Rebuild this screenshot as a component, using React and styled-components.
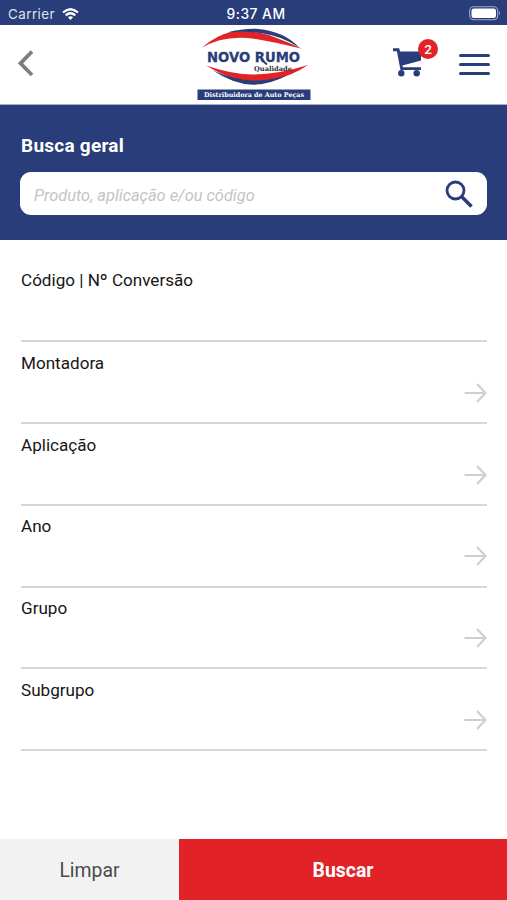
import React from 'react';
import styled, { createGlobalStyle } from 'styled-components';

const NAVY = '#293d7a';
const RED = '#e12227';

const GlobalStyle = createGlobalStyle`
  *, *::before, *::after { box-sizing: border-box; }
  body { margin: 0; background: #fff; }
  button, input { font: inherit; border: 0; padding: 0; background: none; }
`;

const Screen = styled.div`
  display: flex;
  flex-direction: column;
  width: 507px;
  height: 900px;
  background: #fff;
  color: #161616;
  font-family: Roboto, sans-serif;
  overflow: hidden;
`;

const StatusBar = styled.div`
  display: grid;
  grid-template-columns: 1fr auto 1fr;
  align-items: center;
  height: 25px;
  flex: none;
  padding: 2px 5px 0 8px;
  background: ${NAVY};
  color: #fff;
  font-family: Inter, sans-serif;
  font-size: 13.4px;
`;

const Carrier = styled.div`
  display: flex;
  align-items: center;
  gap: 7px;
  color: #dfe3ef;
  letter-spacing: 0.45px;
`;

const Clock = styled.div`
  position: relative;
  left: 1px;
  font-size: 13.8px;
  font-weight: 500;
  letter-spacing: 0.5px;
`;

const Battery = styled.svg`
  justify-self: end;
`;

const Header = styled.header`
  display: grid;
  grid-template-columns: 1fr 116px 1fr;
  height: 80px;
  flex: none;
  padding: 0 17px;
  border-bottom: 1px solid #a9b1ca;
`;

const BackButton = styled.button`
  display: flex;
  justify-self: start;
  align-self: start;
  margin-top: 25px;
`;

const Logo = styled.svg`
  display: block;
  margin-top: 2px;
`;

const Actions = styled.div`
  display: flex;
  justify-content: flex-end;
  align-items: flex-start;
  gap: 20px;
`;

const CartButton = styled.button`
  position: relative;
  display: flex;
  width: 46px;
  height: 52px;
  padding-top: 23px;
`;

const CartBadge = styled.span`
  position: absolute;
  top: 14px;
  left: 25px;
  width: 20px;
  height: 20px;
  border-radius: 50%;
  background: ${RED};
  color: #fff;
  font-size: 13.5px;
  font-weight: 500;
  line-height: 20px;
  text-align: center;
`;

const MenuButton = styled.button`
  display: flex;
  flex-direction: column;
  gap: 6px;
  width: 31px;
  padding-top: 29px;
`;

const MenuLine = styled.span`
  width: 31px;
  height: 3px;
  border-radius: 2px;
  background: ${NAVY};
`;

const SearchPanel = styled.section`
  height: 135px;
  flex: none;
  padding: 29px 20px 0;
  background: ${NAVY};
`;

const SearchTitle = styled.h1`
  margin: 0 0 14px 1px;
  color: #fff;
  font-size: 19px;
  font-weight: 700;
  line-height: 24px;
  letter-spacing: 0.25px;
`;

const SearchBox = styled.div`
  display: flex;
  align-items: center;
  height: 43px;
  padding: 0 14px;
  border-radius: 11px;
  background: #fff;
`;

const SearchInput = styled.input`
  flex: 1;
  min-width: 0;
  height: 24px;
  margin-top: 4px;
  outline: 0;
  font-size: 16.4px;
  font-style: italic;
  &::placeholder { color: #c4c4c4; opacity: 1; }
`;

const Filters = styled.main`
  flex: 1;
  padding: 20.4px 20px 0 21px;
`;

const FilterRow = styled.div`
  display: flex;
  justify-content: space-between;
  height: 81.8px;
  padding-top: ${({ $lead }) => ($lead ? 8.6 : 9.6)}px;
  border-bottom: 2px solid #d6d6d6;
`;

const FilterLabel = styled.div`
  font-size: 17.1px;
  line-height: 22px;
`;

const RowArrow = styled.svg`
  margin-top: 31px;
`;

const Footer = styled.footer`
  display: flex;
  height: 61px;
  flex: none;
`;

const ClearButton = styled.button`
  width: 179px;
  padding-top: 2px;
  background: #f2f2f2;
  color: #4b4b4b;
  font-size: 19.4px;
`;

const SubmitButton = styled.button`
  flex: 1;
  padding-top: 2px;
  background: ${RED};
  color: #fff;
  font-size: 19.4px;
  font-weight: 700;
`;

const filters = [
  { label: 'Código | Nº Conversão', picker: false },
  { label: 'Montadora', picker: true },
  { label: 'Aplicação', picker: true },
  { label: 'Ano', picker: true },
  { label: 'Grupo', picker: true },
  { label: 'Subgrupo', picker: true },
];

function BrandLogo() {
  return (
    <Logo width="116" height="75" viewBox="0 0 116 75">
      <path d="M5.500 21 Q20 8 37 4.500 Q62 3 78 10 Q92 15 106 21.800 Q84 16 60 12 Q28 7 5.500 21Z" fill={RED} />
      <path d="M31 5.500 Q46 1.500 60 1.800 Q88 4 103 20.500 Q86 9 66 6.200 Q48 3.600 31 5.500Z" fill={NAVY} />
      <path d="M10 38.500 Q36 47.500 57 47.500 Q82 47.500 112 38 Q96 49 76 53 Q56 57 42 53 Q24 47 10 38.500Z" fill={RED} />
      <path d="M17 43.500 Q39 53 57 53.500 Q74 53.500 91 48.500 Q74 57.500 57 57.800 Q37 57 17 43.500Z" fill={NAVY} />
      <text x="11" y="34.500" textLength="93" lengthAdjust="spacingAndGlyphs" fill={NAVY} stroke={NAVY} strokeWidth="0.300" fontFamily="DejaVu Sans, sans-serif" fontSize="14.500" fontWeight="700">NOVO RUMO</text>
      <path d="M65 32 Q68 35 71 37.500" fill="none" stroke={NAVY} strokeWidth="1.800" />
      <text x="58" y="43.500" textLength="38" lengthAdjust="spacingAndGlyphs" fill="#333" fontFamily="DejaVu Serif, serif" fontSize="6.800" fontWeight="700">Qualidade</text>
      <rect x="1.500" y="62.500" width="113" height="10.500" fill={NAVY} />
      <text x="8" y="70" textLength="100" lengthAdjust="spacingAndGlyphs" fill="#fff" fontFamily="DejaVu Serif, serif" fontSize="6.500" fontWeight="700">Distribuidora de Auto Peças</text>
    </Logo>
  );
}

export default function App() {
  return (
    <>
      <GlobalStyle />
      <Screen>
        <StatusBar>
          <Carrier>
            Carrier
            <svg width="17" height="12" viewBox="0 0 17 12" fill="none" stroke="#fff" strokeWidth="2.300">
              <path d="M1 4.500 Q8.500 -2 16 4.500 M3.700 7.300 Q8.500 3.300 13.300 7.300" />
              <path d="M8.500 12 L5.900 9.200 Q8.500 7.200 11.100 9.200Z" fill="#fff" stroke="none" />
            </svg>
          </Carrier>
          <Clock>9:37 AM</Clock>
          <Battery width="33" height="15" viewBox="0 0 33 15">
            <rect x="0.700" y="0.700" width="28" height="13" rx="4" fill="none" stroke="#a0a9c6" strokeWidth="1.100" />
            <rect x="2.500" y="2.500" width="24.500" height="9.500" rx="2.300" fill="#fff" />
            <path d="M30 5 Q32 7.200 30 9.500Z" fill="#a0a9c6" />
          </Battery>
        </StatusBar>
        <Header>
          <BackButton aria-label="Voltar">
            <svg width="18" height="27" viewBox="0 0 18 27" fill="none" stroke="#7e7e7e" strokeWidth="3.800">
              <path d="M15 1.500 L3.500 13.300 L15 25" />
            </svg>
          </BackButton>
          <BrandLogo />
          <Actions>
            <CartButton aria-label="Carrinho">
              <svg width="29" height="29" viewBox="0 0 29 29" fill={NAVY}>
                <path d="M0 0.300 H6.200 L7 3.500 H28 V12.500 L9.500 17.500 L9.900 19.300 H28 V22 H7.500 L3.900 3.300 H0Z" />
                <circle cx="8.300" cy="25.200" r="3.200" />
                <circle cx="23.700" cy="25.200" r="3.200" />
              </svg>
              <CartBadge>2</CartBadge>
            </CartButton>
            <MenuButton aria-label="Menu">
              <MenuLine />
              <MenuLine />
              <MenuLine />
            </MenuButton>
          </Actions>
        </Header>
        <SearchPanel>
          <SearchTitle>Busca geral</SearchTitle>
          <SearchBox>
            <SearchInput placeholder="Produto, aplicação e/ou código" />
            <svg width="28" height="28" viewBox="0 0 28 28" fill="none" stroke={NAVY}>
              <circle cx="10.500" cy="10.500" r="8.500" strokeWidth="2.800" />
              <path d="M17 17 L26.500 26.500" strokeWidth="3.600" />
            </svg>
          </SearchBox>
        </SearchPanel>
        <Filters>
          {filters.map(({ label, picker }) => (
            <FilterRow key={label} $lead={!picker}>
              <FilterLabel>{label}</FilterLabel>
              {picker && (
                <RowArrow width="23" height="20" viewBox="0 0 23 20" fill="none" stroke="#cfcfcf" strokeWidth="2.200">
                  <path d="M0.500 10 H21.500 M13 1 L21.500 10 L13 19" />
                </RowArrow>
              )}
            </FilterRow>
          ))}
        </Filters>
        <Footer>
          <ClearButton>Limpar</ClearButton>
          <SubmitButton>Buscar</SubmitButton>
        </Footer>
      </Screen>
    </>
  );
}
